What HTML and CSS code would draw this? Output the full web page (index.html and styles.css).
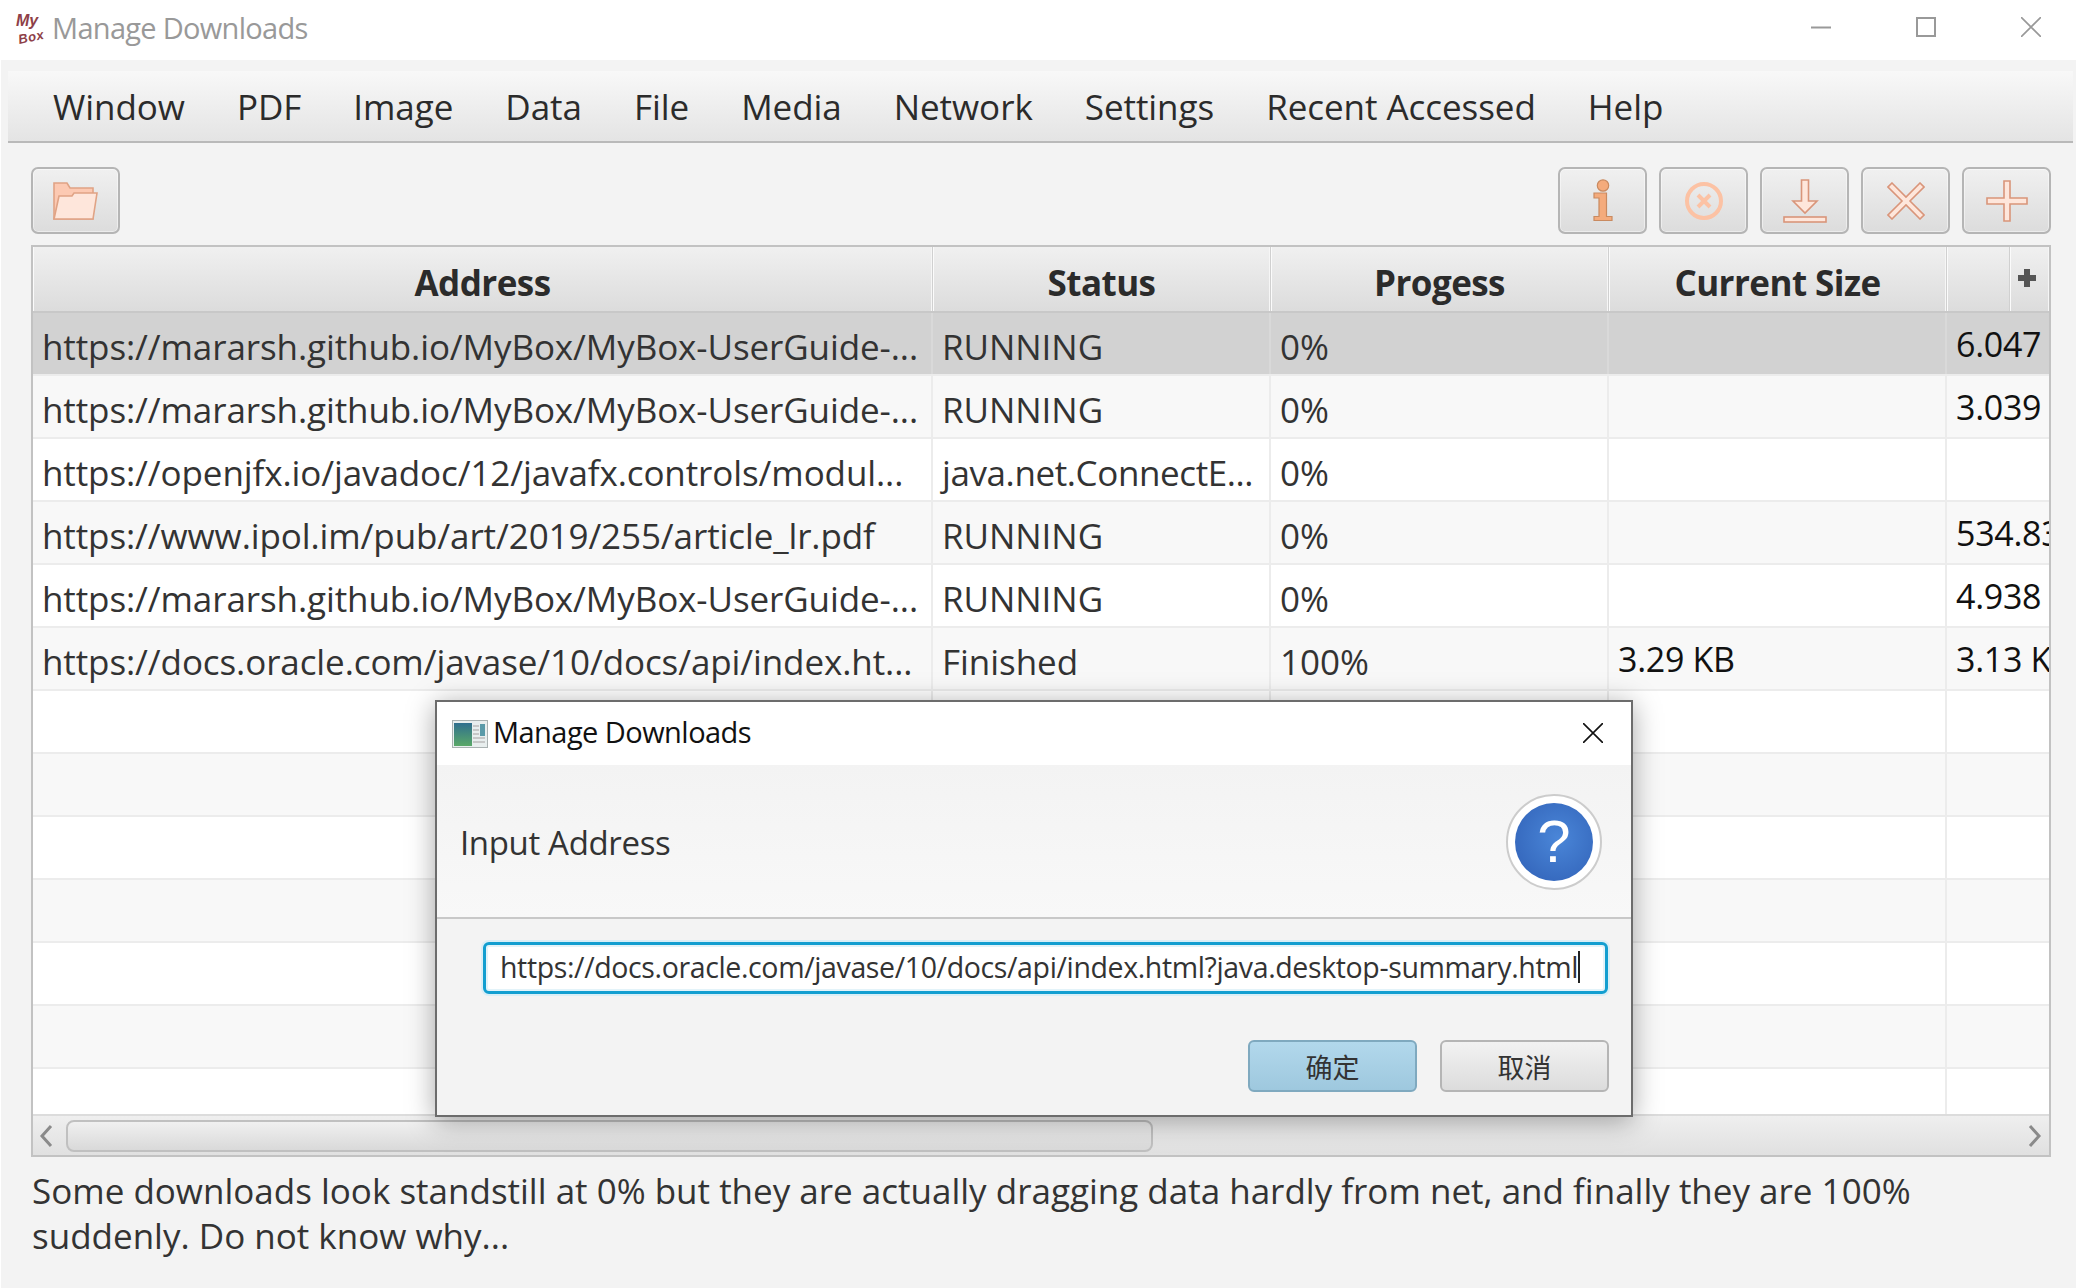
FILE: index.html
```html
<!DOCTYPE html>
<html lang="en">
<head>
    <meta charset="UTF-8">
    <title>Manage Downloads</title>
    <link rel="stylesheet" href="styles.css">
</head>
<body>
<div class="app">
    <div class="titlebar">
        <div class="logo"><span class="logo-my">My</span><span class="logo-box">Box</span></div>
        <span class="title-text">Manage Downloads</span>
        <div class="winbtns">
            <svg width="20" height="20" viewBox="0 0 20 20"><path d="M0 10.5H20" stroke="#999" stroke-width="2"/></svg>
            <svg width="20" height="20" viewBox="0 0 20 20"><rect x="1" y="1" width="18" height="18" fill="none" stroke="#999" stroke-width="2"/></svg>
            <svg width="20" height="20" viewBox="0 0 20 20"><path d="M0 0L20 20M20 0L0 20" stroke="#999" stroke-width="1.6"/></svg>
        </div>
    </div>

    <div class="main">
        <div class="menubar">
            <span>Window</span><span>PDF</span><span>Image</span><span>Data</span><span>File</span><span>Media</span><span>Network</span><span>Settings</span><span>Recent Accessed</span><span>Help</span>
        </div>

        <div class="toolbar">
            <button class="toolbtn">
                <svg width="45" height="38" viewBox="0 0 45 38">
                    <path d="M1 1H14L17 6H40V37H1Z" fill="#fcc9b2" stroke="#e0a385" stroke-width="1.6"/>
                    <path d="M6 14H19L21 11H44L40 37H1Z" fill="#fee6db" stroke="#e0a385" stroke-width="1.6"/>
                </svg>
            </button>
            <div class="spacer"></div>
            <button class="toolbtn">
                <svg width="20" height="43" viewBox="0 0 20 43">
                    <circle cx="10" cy="6.5" r="5.7" fill="#f4ab7c" stroke="#c98a60" stroke-width="1.2"/>
                    <path d="M1 14H13.5V37.5H19V41.5H1V37.5H6V19H1Z" fill="#f4ab7c" stroke="#c98a60" stroke-width="1.2"/>
                </svg>
            </button>
            <button class="toolbtn">
                <svg width="40" height="40" viewBox="0 0 40 40">
                    <circle cx="20" cy="20" r="17" fill="none" stroke="#fcc2a4" stroke-width="4"/>
                    <path d="M14 14L26 26M26 14L14 26" stroke="#fcc2a4" stroke-width="4"/>
                </svg>
            </button>
            <button class="toolbtn">
                <svg width="44" height="44" viewBox="0 0 44 44">
                    <path d="M18.5 1H25.5V22H34L22 34L10 22H18.5Z" fill="#fee6db" stroke="#d9957a" stroke-width="1.6"/>
                    <rect x="1" y="38" width="42" height="5" fill="#fee6db" stroke="#d9957a" stroke-width="1.6"/>
                </svg>
            </button>
            <button class="toolbtn">
                <svg width="38" height="38" viewBox="0 0 38 38">
                    <path d="M5 1L19 15L33 1L37 5L23 19L37 33L33 37L19 23L5 37L1 33L15 19L1 5Z" fill="#fee6db" stroke="#d9957a" stroke-width="1.6"/>
                </svg>
            </button>
            <button class="toolbtn">
                <svg width="42" height="42" viewBox="0 0 42 42">
                    <path d="M18 1H24V18H41V24H24V41H18V24H1V18H18Z" fill="#fee6db" stroke="#d9957a" stroke-width="1.6"/>
                </svg>
            </button>
        </div>

        <div class="table">
            <div class="thead">
                <div class="th col-addr">Address</div>
                <div class="th col-status">Status</div>
                <div class="th col-prog">Progess</div>
                <div class="th col-cur">Current Size</div>
                <div class="th col-last">
                    <div class="corner">
                        <svg width="18" height="18" viewBox="0 0 18 18"><path d="M6 0H12V6H18V12H12V18H6V12H0V6H6Z" fill="#555"/></svg>
                    </div>
                </div>
            </div>
            <div class="tbody">
                <div class="row selected">
                    <div class="td col-addr">https://mararsh.github.io/MyBox/MyBox-UserGuide-...</div>
                    <div class="td col-status">RUNNING</div>
                    <div class="td col-prog">0%</div>
                    <div class="td col-cur num"></div>
                    <div class="td col-last num">6.047</div>
                </div>
                <div class="row">
                    <div class="td col-addr">https://mararsh.github.io/MyBox/MyBox-UserGuide-...</div>
                    <div class="td col-status">RUNNING</div>
                    <div class="td col-prog">0%</div>
                    <div class="td col-cur num"></div>
                    <div class="td col-last num">3.039</div>
                </div>
                <div class="row">
                    <div class="td col-addr">https://openjfx.io/javadoc/12/javafx.controls/modul...</div>
                    <div class="td col-status tight">java.net.ConnectE...</div>
                    <div class="td col-prog">0%</div>
                    <div class="td col-cur num"></div>
                    <div class="td col-last num"></div>
                </div>
                <div class="row">
                    <div class="td col-addr">https://www.ipol.im/pub/art/2019/255/article_lr.pdf</div>
                    <div class="td col-status">RUNNING</div>
                    <div class="td col-prog">0%</div>
                    <div class="td col-cur num"></div>
                    <div class="td col-last num">534.83 KB</div>
                </div>
                <div class="row">
                    <div class="td col-addr">https://mararsh.github.io/MyBox/MyBox-UserGuide-...</div>
                    <div class="td col-status">RUNNING</div>
                    <div class="td col-prog">0%</div>
                    <div class="td col-cur num"></div>
                    <div class="td col-last num">4.938</div>
                </div>
                <div class="row">
                    <div class="td col-addr">https://docs.oracle.com/javase/10/docs/api/index.ht...</div>
                    <div class="td col-status">Finished</div>
                    <div class="td col-prog">100%</div>
                    <div class="td col-cur num">3.29 KB</div>
                    <div class="td col-last num">3.13 KB</div>
                </div>
                <div class="row"><div class="td col-addr"></div><div class="td col-status"></div><div class="td col-prog"></div><div class="td col-cur"></div><div class="td col-last"></div></div>
                <div class="row"><div class="td col-addr"></div><div class="td col-status"></div><div class="td col-prog"></div><div class="td col-cur"></div><div class="td col-last"></div></div>
                <div class="row"><div class="td col-addr"></div><div class="td col-status"></div><div class="td col-prog"></div><div class="td col-cur"></div><div class="td col-last"></div></div>
                <div class="row"><div class="td col-addr"></div><div class="td col-status"></div><div class="td col-prog"></div><div class="td col-cur"></div><div class="td col-last"></div></div>
                <div class="row"><div class="td col-addr"></div><div class="td col-status"></div><div class="td col-prog"></div><div class="td col-cur"></div><div class="td col-last"></div></div>
                <div class="row"><div class="td col-addr"></div><div class="td col-status"></div><div class="td col-prog"></div><div class="td col-cur"></div><div class="td col-last"></div></div>
                <div class="row"><div class="td col-addr"></div><div class="td col-status"></div><div class="td col-prog"></div><div class="td col-cur"></div><div class="td col-last"></div></div>
            </div>
            <div class="hscroll">
                <svg width="14" height="24" viewBox="0 0 14 24"><path d="M12 2L3 12L12 22" fill="none" stroke="#8a8a8a" stroke-width="3"/></svg>
                <div class="thumb-track"><div class="thumb"></div></div>
                <svg width="14" height="24" viewBox="0 0 14 24"><path d="M2 2L11 12L2 22" fill="none" stroke="#8a8a8a" stroke-width="3"/></svg>
            </div>
        </div>

        <p class="note">Some downloads look standstill at 0% but they are actually dragging data hardly from net, and finally they are 100% suddenly. Do not know why...</p>
    </div>

    <div class="dialog">
        <div class="dlg-title">
            <svg width="36" height="28" viewBox="0 0 36 28">
                <defs><linearGradient id="dlgicon" x1="0" y1="0" x2="0" y2="1"><stop offset="0" stop-color="#2f6f8e"/><stop offset="1" stop-color="#5aa868"/></linearGradient></defs>
                <rect x=".5" y=".5" width="35" height="27" fill="#e8eeee" stroke="#a9b1b1"/>
                <rect x="2" y="3" width="18" height="23" fill="url(#dlgicon)"/>
                <rect x="28" y="4" width="5" height="12" fill="#5a9aa8"/>
                <path d="M21 6H27M21 10H27M21 14H27M21 18H33M21 22H33" stroke="#bbb" stroke-width="1.5"/>
            </svg>
            <span class="dlg-title-text">Manage Downloads</span>
            <svg class="dlg-close" width="20" height="20" viewBox="0 0 20 20"><path d="M0 0L20 20M20 0L0 20" stroke="#111" stroke-width="1.6"/></svg>
        </div>
        <div class="dlg-head">
            <span class="dlg-label">Input Address</span>
            <div class="qmark"><div class="qmark-in">?</div></div>
        </div>
        <div class="dlg-body">
            <div class="urlbox"><span>https://docs.oracle.com/javase/10/docs/api/index.html?java.desktop-summary.html</span><i class="caret"></i></div>
            <div class="dlg-btns">
                <button class="dlg-btn ok">确定</button>
                <button class="dlg-btn">取消</button>
            </div>
        </div>
    </div>
</div>
</body>
</html>
```

FILE: styles.css
```css
html, body {
    margin: 0;
    padding: 0;
    background: #fff;
}

.app {
    position: relative;
    width: 2076px;
    height: 1288px;
    overflow: hidden;
    font-family: "Open Sans", "Noto Sans CJK SC", sans-serif;
    color: #333;
}

/* window title */
.titlebar {
    height: 60px;
    display: flex;
    align-items: center;
    background: #fff;
    padding: 0 35px 0 14px;
}

.logo {
    width: 34px;
    height: 34px;
    margin-right: 4px;
    display: flex;
    flex-direction: column;
    font-family: "Liberation Sans", sans-serif;
    font-style: italic;
    font-weight: bold;
    font-size: 13px;
    line-height: 15px;
    color: #8e3f48;
}

.logo-my {
    margin-left: 2px;
    font-size: 16px;
}

.logo-box {
    margin: 1px 0 0 4px;
    white-space: nowrap;
    letter-spacing: 0.5px;
    transform: rotate(-12deg);
}

.title-text {
    font-size: 29px;
    letter-spacing: -0.7px;
    color: #999;
    margin-top: -5px;
}

.winbtns {
    margin-left: auto;
    display: flex;
    gap: 85px;
    margin-top: -6px;
}

/* main area */
.main {
    height: 1228px;
    margin-left: 1px;
    padding: 11px 3px 0 7px;
    box-sizing: border-box;
    background: #f3f3f3;
}

.menubar {
    height: 72px;
    box-sizing: border-box;
    padding-left: 45px;
    display: flex;
    align-items: center;
    gap: 52px;
    font-size: 35px;
    letter-spacing: -0.05px;
    color: #2b2b2b;
    background: linear-gradient(#f8f8f8, #e4e4e4);
    border-bottom: 2px solid #b9b9b9;
}

.toolbar {
    display: flex;
    gap: 12px;
    margin: 24px 22px 11px 23px;
}

.spacer {
    flex: 1;
}

.toolbtn {
    width: 89px;
    height: 67px;
    padding: 0;
    display: flex;
    align-items: center;
    justify-content: center;
    background: linear-gradient(#f0f0f0, #dcdcdc);
    border: 2px solid #b5b5b5;
    border-radius: 7px;
    box-shadow: inset 0 0 0 1px rgba(255, 255, 255, 0.45);
}

/* table */
.table {
    margin: 0 22px 0 23px;
    height: 912px;
    box-sizing: border-box;
    border: 2px solid #c2c2c2;
    background: #fff;
    display: flex;
    flex-direction: column;
}

.thead {
    height: 66px;
    flex: none;
    box-sizing: border-box;
    display: flex;
    background: linear-gradient(#f0f0f0, #dcdcdc);
    border-bottom: 2px solid #c8c8c8;
}

.th {
    box-sizing: border-box;
    padding-top: 6px;
    display: flex;
    align-items: center;
    justify-content: center;
    font-weight: bold;
    font-size: 35px;
    letter-spacing: -0.55px;
    color: #2b2b2b;
    border-right: 1px solid #d0d0d0;
    box-shadow: inset 1px 0 0 #fbfbfb, inset -1px 0 0 #f6f6f6;
}

.col-addr { width: 900px; }
.col-status { width: 338px; }
.col-prog { width: 338px; }
.col-cur { width: 338px; }
.col-last { flex: 1; min-width: 0; }

.th.col-last {
    padding-top: 0;
    justify-content: flex-end;
    border-right: none;
}

.corner {
    width: 40px;
    height: 100%;
    box-sizing: border-box;
    display: flex;
    justify-content: center;
    align-items: flex-start;
    padding: 22px 5px 0 0;
    border-left: 1px solid #d0d0d0;
    box-shadow: inset 1px 0 0 #fbfbfb;
}

.tbody {
    flex: 1;
    min-height: 0;
    overflow: hidden;
}

.row {
    height: 63px;
    box-sizing: border-box;
    display: flex;
    border-bottom: 2px solid #ececec;
    background: #fff;
}

.row:nth-child(even) {
    background: #f8f8f8;
}

.row.selected {
    background: #d2d2d2;
}

.td {
    box-sizing: border-box;
    padding: 6px 0 0 9px;
    display: flex;
    align-items: center;
    white-space: nowrap;
    overflow: hidden;
    font-size: 35px;
    letter-spacing: -0.05px;
    color: #333;
    border-right: 2px solid #ececec;
}

.td.col-addr {
    letter-spacing: -0.1px;
}

.td.tight {
    letter-spacing: -0.4px;
}

.row.selected .td {
    border-right-color: #d9d9d9;
}

.td.num {
    color: #111;
    padding-top: 0;
    font-size: 34px;
    letter-spacing: -0.3px;
}

.td.col-last {
    border-right: none;
}

.hscroll {
    height: 41px;
    flex: none;
    box-sizing: border-box;
    display: flex;
    align-items: center;
    gap: 13px;
    padding: 0 7px 0 6px;
    background: linear-gradient(#efefef, #e0e0e0);
    border-top: 2px solid #dcdcdc;
}

.thumb-track {
    flex: 1;
}

.thumb {
    width: 1087px;
    height: 32px;
    box-sizing: border-box;
    background: linear-gradient(#f0f0f0, #d9d9d9);
    border: 2px solid #c0c0c0;
    border-radius: 8px;
}

.note {
    margin: 11px 60px 0 24px;
    font-size: 35px;
    line-height: 45px;
    color: #333;
}

/* modal */
.dialog {
    position: absolute;
    left: 435px;
    top: 700px;
    width: 1198px;
    height: 417px;
    box-sizing: border-box;
    border: 2px solid #6c6c6c;
    background: #f3f3f3;
    box-shadow: 0 4px 26px rgba(0, 0, 0, 0.35);
    display: flex;
    flex-direction: column;
}

.dlg-title {
    height: 63px;
    flex: none;
    display: flex;
    align-items: center;
    padding: 0 28px 0 15px;
    background: #fff;
}

.dlg-title-text {
    margin: -4px 0 0 5px;
    font-size: 29px;
    letter-spacing: -0.55px;
    color: #111;
}

.dlg-close {
    margin: -2px 0 0 auto;
}

.dlg-head {
    height: 154px;
    flex: none;
    box-sizing: border-box;
    display: flex;
    align-items: center;
    justify-content: space-between;
    padding: 2px 29px 0 23px;
    background: linear-gradient(#f3f3f3, #f8f8f8);
    border-bottom: 2px solid #c8c8c8;
}

.dlg-label {
    font-size: 33px;
    letter-spacing: -0.35px;
    color: #333;
}

.qmark {
    width: 96px;
    height: 96px;
    box-sizing: border-box;
    padding: 7px;
    border-radius: 50%;
    background: #fff;
    border: 2px solid #ccc;
}

.qmark-in {
    width: 78px;
    height: 78px;
    border-radius: 50%;
    background: radial-gradient(circle at 55% 45%, #4a86d8, #2f5fb5);
    color: #fff;
    font-size: 60px;
    line-height: 78px;
    text-align: center;
    font-family: "Liberation Sans", sans-serif;
}

.dlg-body {
    flex: 1;
    padding: 23px 23px 0 46px;
}

.urlbox {
    height: 52px;
    box-sizing: border-box;
    display: flex;
    align-items: center;
    padding: 0 0 2px 14px;
    background: #fff;
    border: 3px solid #129ed0;
    border-radius: 6px;
    box-shadow: 0 0 0 2px #d9eef6, inset 0 0 0 2px #e3f3f9;
    font-size: 28.5px;
    letter-spacing: -0.37px;
    color: #333;
    white-space: nowrap;
}

.caret {
    width: 2px;
    height: 32px;
    background: #222;
}

.dlg-btns {
    display: flex;
    justify-content: flex-end;
    gap: 23px;
    margin: 46px -1px 0 0;
}

.dlg-btn {
    width: 169px;
    height: 52px;
    padding: 0;
    font-family: "Noto Sans CJK SC", sans-serif;
    font-size: 27px;
    color: #333;
    background: linear-gradient(#f2f2f2, #dcdcdc);
    border: 2px solid #b5b5b5;
    border-radius: 6px;
}

.dlg-btn.ok {
    background: linear-gradient(#b2d8ec, #9ec8de);
    border-color: #7fa9bf;
}
```
